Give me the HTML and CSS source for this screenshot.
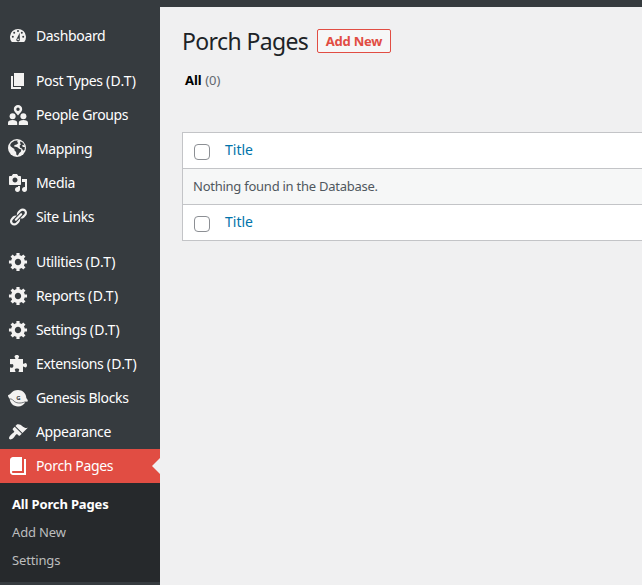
FILE: index.html
```html
<!DOCTYPE html>
<html lang="en">
<head>
<meta charset="utf-8">
<title>Porch Pages</title>
<link rel="stylesheet" href="styles.css">
</head>
<body>
<svg class="defs" aria-hidden="true">
  <symbol id="gear" viewBox="0.1 1.1 18.8 18.8"><path fill-rule="evenodd" d="M18 12h-2.18c-.17.7-.44 1.35-.81 1.93l1.54 1.54-2.1 2.1-1.54-1.54c-.58.36-1.23.63-1.91.79V19H8v-2.18c-.68-.16-1.33-.43-1.91-.79l-1.54 1.54-2.12-2.12 1.54-1.54c-.36-.58-.63-1.23-.79-1.91H1V9.03h2.17c.16-.7.44-1.35.8-1.94L2.43 5.55l2.1-2.1 1.54 1.54c.58-.37 1.24-.64 1.93-.81V2h3v2.18c.68.16 1.33.43 1.91.79l1.54-1.54 2.12 2.12-1.54 1.54c.36.59.64 1.24.8 1.94H18V12zm-8.5 1.5c1.66 0 3-1.34 3-3s-1.34-3-3-3-3 1.34-3 3 1.34 3 3 3z"/></symbol>
</svg>
<header class="topbar"></header>
<div class="shell">
  <nav class="menu">
    <a class="item"><svg class="icon" viewBox="0 1 20 20"><path d="M3.8 17h12.4A8 8 0 1 0 3.8 17z"/><g class="cut"><circle cx="10" cy="6" r="1"/><circle cx="6.2" cy="7.7" r="1"/><circle cx="13.8" cy="7.7" r="1"/><circle cx="4.8" cy="11.7" r="1"/><circle cx="15.2" cy="11.7" r="1"/><path d="M11.7 7.8l.1 6.4a1.8 1.8 0 1 1-3-.7z"/></g><circle cx="10.1" cy="14.4" r=".8"/></svg><span class="label">Dashboard</span></a>
    <a class="item gap"><svg class="icon" viewBox="0 0 20 20"><path d="M6 15V2h10v13H6zm-1 1h8v2H3V5h2v11z"/></svg><span class="label">Post Types <span class="tag">(D.T)</span></span></a>
    <a class="item"><svg class="icon" viewBox="0 0 20 20"><path fill-rule="evenodd" d="M10 0a4.2 4.2 0 0 1 4.2 4.2C14.2 6.5 12 8 10 10.500 8 8 5.800 6.500 5.800 4.200A4.200 4.200 0 0 1 10 0zm0 2.500a1.700 1.700 0 1 0 0 3.400 1.700 1.700 0 0 0 0-3.400z"/><circle cx="4.600" cy="11.300" r="3"/><circle cx="15.400" cy="11.300" r="3"/><path d="M0 20v-2.200C0 15.900 1.800 15 4.600 15s4.600.9 4.600 2.800V20zm10.800 0v-2.200c0-1.900 1.800-2.800 4.600-2.800s4.600.9 4.600 2.800V20z"/></svg><span class="label">People Groups</span></a>
    <a class="item"><svg class="icon" viewBox="0 0 20 20"><circle cx="9" cy="9" r="9"/><path class="cut" d="M3.500 3.700L6.500 1.700l3.200-.2-.6 1.500 1.300.9-1.700 1.500-1.900.6-1 1.200 1.700.5 1.900.6 1.700 1.500 2.300.8-.6 2.100-1.600 1.400-1.300 2.400-1.500-.8-.3-2.600-1.600-1.500-.1-1.700-2.300-1.400-1.800-1.400.1-1.800zM12.500 2.200l2.500 1.600 1.600 2.600-1.700-.6-.9 1.100 1.200 1 1.600.2-.2 2.600-1.300 1-1.500-2.300-1.700-.7-.5-1.900 1.300-1.500-.9-1.400z"/></svg><span class="label">Mapping</span></a>
    <a class="item"><svg class="icon" viewBox="0 0 20 20"><path fill-rule="evenodd" d="M13 11V4c0-.55-.45-1-1-1h-1.670L9 1H5L3.670 3H2c-.55 0-1 .45-1 1v7c0 .55.45 1 1 1h10c.55 0 1-.45 1-1zM7 4.500c1.380 0 2.500 1.120 2.500 2.500S8.380 9.500 7 9.500 4.500 8.380 4.500 7 5.620 4.500 7 4.500zM14 6h5v10.500c0 1.380-1.120 2.500-2.500 2.500S14 17.880 14 16.500s1.120-2.500 2.500-2.500c.17 0 .34.02.5.05V9h-3V6zm-4 8.050V13h2v3.500c0 1.380-1.120 2.500-2.500 2.500S7 17.880 7 16.500 8.120 14 9.500 14c.17 0 .34.02.5.05z"/></svg><span class="label">Media</span></a>
    <a class="item"><svg class="icon" viewBox="0 0 20 20"><path d="M17.740 2.760c1.680 1.690 1.680 4.410 0 6.100l-1.530 1.520c-1.120 1.120-2.700 1.470-4.140 1.090l2.620-2.610.76-.77.76-.76c.84-.84.84-2.200 0-3.040-.84-.85-2.200-.85-3.040 0l-.77.76-3.380 3.380c-.37-1.440-.02-3.020 1.100-4.140l1.520-1.530c1.690-1.680 4.420-1.680 6.100 0zM8.590 13.430l5.340-5.340c.42-.42.42-1.100 0-1.520-.44-.43-1.130-.39-1.530 0l-5.330 5.340c-.42.42-.42 1.100 0 1.520.44.43 1.130.39 1.520 0zm-.76 2.290l4.140-4.150c.38 1.440.03 3.020-1.090 4.140l-1.520 1.530c-1.690 1.680-4.410 1.680-6.100 0-1.680-1.680-1.680-4.420 0-6.100l1.530-1.520c1.120-1.120 2.700-1.470 4.140-1.100l-4.140 4.150c-.85.84-.85 2.200 0 3.050.84.84 2.200.84 3.040 0z"/></svg><span class="label">Site Links</span></a>
    <a class="item gap"><svg class="icon"><use href="#gear"/></svg><span class="label">Utilities <span class="tag">(D.T)</span></span></a>
    <a class="item"><svg class="icon"><use href="#gear"/></svg><span class="label">Reports <span class="tag">(D.T)</span></span></a>
    <a class="item"><svg class="icon"><use href="#gear"/></svg><span class="label">Settings <span class="tag">(D.T)</span></span></a>
    <a class="item"><svg class="icon" viewBox="0 0 20 20"><path d="M2 5h5.300C7.700 4 6.500 3.600 6.500 2.700 6.500 1.700 7.600 1 8.800 1s2.300.7 2.300 1.700c0 .9-1.100 1.300-.7 2.300H15v4.700c1 .4 1.500-.8 2.500-.8.900 0 1.500 1.100 1.500 2.300s-.6 2.300-1.500 2.300c-1 0-1.500-1.200-2.500-.8V18h-4.300c-.4-1 .5-1.500.5-2.300 0-.9-1-1.300-2.200-1.300s-2.200.4-2.200 1.300c0 .8 1 1.300.6 2.300H2v-4.400c1-.4 1.300.1 2.100.1.900 0 1.300-.8 1.300-1.900s-.4-1.900-1.300-1.900c-.8 0-1.100.6-2.100.2z"/></svg><span class="label">Extensions <span class="tag">(D.T)</span></span></a>
    <a class="item"><svg class="icon" viewBox="0 0 20 20"><path d="M0 7.300C1 6.800 2 6.300 2.700 5.500 4.500 3 7 2 10 2c4.500 0 8.200 3.500 8.300 8 .9 1 1.500 2 1.700 3.300-.8.400-1.600.5-2.500.4C16.200 16.800 13.300 18.500 10 18.500c-4.700 0-8-3.300-8.300-7.700C.7 9.800 0 8.600 0 7.300z"/><path class="swoosh" d="M1.700 11c1.500-.2 2.600.3 3.600 1.500 2.400 2.800 7 3.400 12.200 1.200"/><text class="glyph" x="8.200" y="12.300">G</text></svg><span class="label">Genesis Blocks</span></a>
    <a class="item"><svg class="icon" viewBox="0 0 20 20"><path d="M14.480 11.060L7.410 3.990l1.500-1.500c.5-.56 2.300-.47 3.510.32 1.210.8 1.430 1.280 2.910 2.100 1.180.64 2.450 1.260 4.450.85zm-.71.71L6.700 4.700 4.930 6.470c-.39.39-.39 1.020 0 1.410l1.060 1.060c.39.39.39 1.030 0 1.420-.6.6-1.430 1.110-2.210 1.690-.35.26-.7.53-1.010.84C1.430 14.230.4 16.080 1.400 17.070c.99 1 2.840-.03 4.180-1.360.31-.31.58-.66.85-1.020.57-.78 1.080-1.610 1.690-2.210.39-.39 1.020-.39 1.410 0l1.060 1.060c.39.39 1.020.39 1.410 0z"/></svg><span class="label">Appearance</span></a>
    <a class="item current"><svg class="icon" viewBox="0 0 20 20"><path d="M16 3h2v16H5c-1.660 0-3-1.340-3-3V4c0-1.660 1.340-3 3-3h9v14H5c-.55 0-1 .45-1 1s.45 1 1 1h11V3z"/></svg><span class="label">Porch Pages</span></a>
    <div class="submenu">
      <a class="sub active">All Porch Pages</a>
      <a class="sub">Add New</a>
      <a class="sub">Settings</a>
    </div>
  </nav>
  <main class="content">
    <div class="heading"><h1>Porch Pages</h1><a class="add">Add New</a></div>
    <div class="filters"><b>All</b> <span>(0)</span></div>
    <div class="table">
      <div class="row head"><span class="check"></span><a>Title</a></div>
      <div class="row empty">Nothing found in the Database.</div>
      <div class="row head"><span class="check"></span><a>Title</a></div>
    </div>
  </main>
</div>
</body>
</html>
```

FILE: styles.css
```css
* { box-sizing: border-box; }
body {
  margin: 0;
  height: 585px;
  overflow: hidden;
  background: #f0f0f1;
  font-family: "Noto Sans", "Open Sans", sans-serif;
  font-size: 13px;
}
.defs { display: none; }
.topbar { height: 7px; background: #363b3f; }
.shell { display: flex; height: 578px; }
.menu { width: 160px; flex: none; padding-top: 12px; background: #363b3f; }
.item {
  display: flex;
  align-items: center;
  gap: 8px;
  height: 34px;
  padding-left: 8px;
  color: #fff;
  font-size: 14px;
  letter-spacing: -0.35px;
  white-space: nowrap;
}
.label { padding-bottom: 2px; }
.tag { letter-spacing: 0.35px; }
.gap { margin-top: 11px; }
.icon { width: 20px; height: 20px; flex: none; fill: #f3f2f1; }
.cut { fill: #363b3f; }
.swoosh { fill: none; stroke: #363b3f; stroke-width: .7; }
.glyph { fill: #363b3f; font: bold 6px "Noto Sans", sans-serif; letter-spacing: 0; }
.current { position: relative; background: #e14d43; }
.current .icon { fill: #fff; }
.current::after {
  content: "";
  position: absolute;
  right: 0;
  top: 9px;
  border: 8px solid transparent;
  border-left: 0;
  border-right-color: #f0f0f1;
}
.submenu { height: 99px; padding: 7px 12px; background: #26292c; }
.sub { display: block; height: 28px; line-height: 28px; color: #bcbdbe; letter-spacing: -0.15px; }
.active { color: #fff; font-weight: 700; }
.content { flex: 1; min-width: 0; padding: 20px 0 0 22px; }
.heading { display: flex; align-items: center; height: 28px; }
h1 { width: 135px; margin: 0; color: #1d2327; font-size: 23px; font-weight: 400; letter-spacing: -0.62px; white-space: nowrap; }
.add {
  width: 74px;
  height: 24px;
  border: 1px solid #e14d43;
  border-radius: 2px;
  background: #f6f7f7;
  color: #e14d43;
  font-weight: 700;
  letter-spacing: -0.2px;
  line-height: 22px;
  text-align: center;
}
.filters { height: 24px; margin-top: 13px; padding-left: 3px; line-height: 24px; color: #646970; }
.filters b { color: #000; }
.table { width: 480px; margin-top: 40px; border: 1px solid #c3c4c7; border-right: 0; background: #fff; }
.row { display: flex; align-items: center; height: 36px; padding-left: 10px; border-bottom: 1px solid #c3c4c7; color: #50575e; }
.row:last-child { height: 35px; border-bottom: 0; }
.row a { padding-bottom: 2px; color: #0073aa; font-size: 14px; }
.check { width: 16px; height: 16px; margin: 3px 15px 0 1px; border: 1px solid #8c8f94; border-radius: 4px; background: #fff; }
.row.empty { padding-bottom: 2px; background: #f6f7f7; letter-spacing: -0.25px; }
```
